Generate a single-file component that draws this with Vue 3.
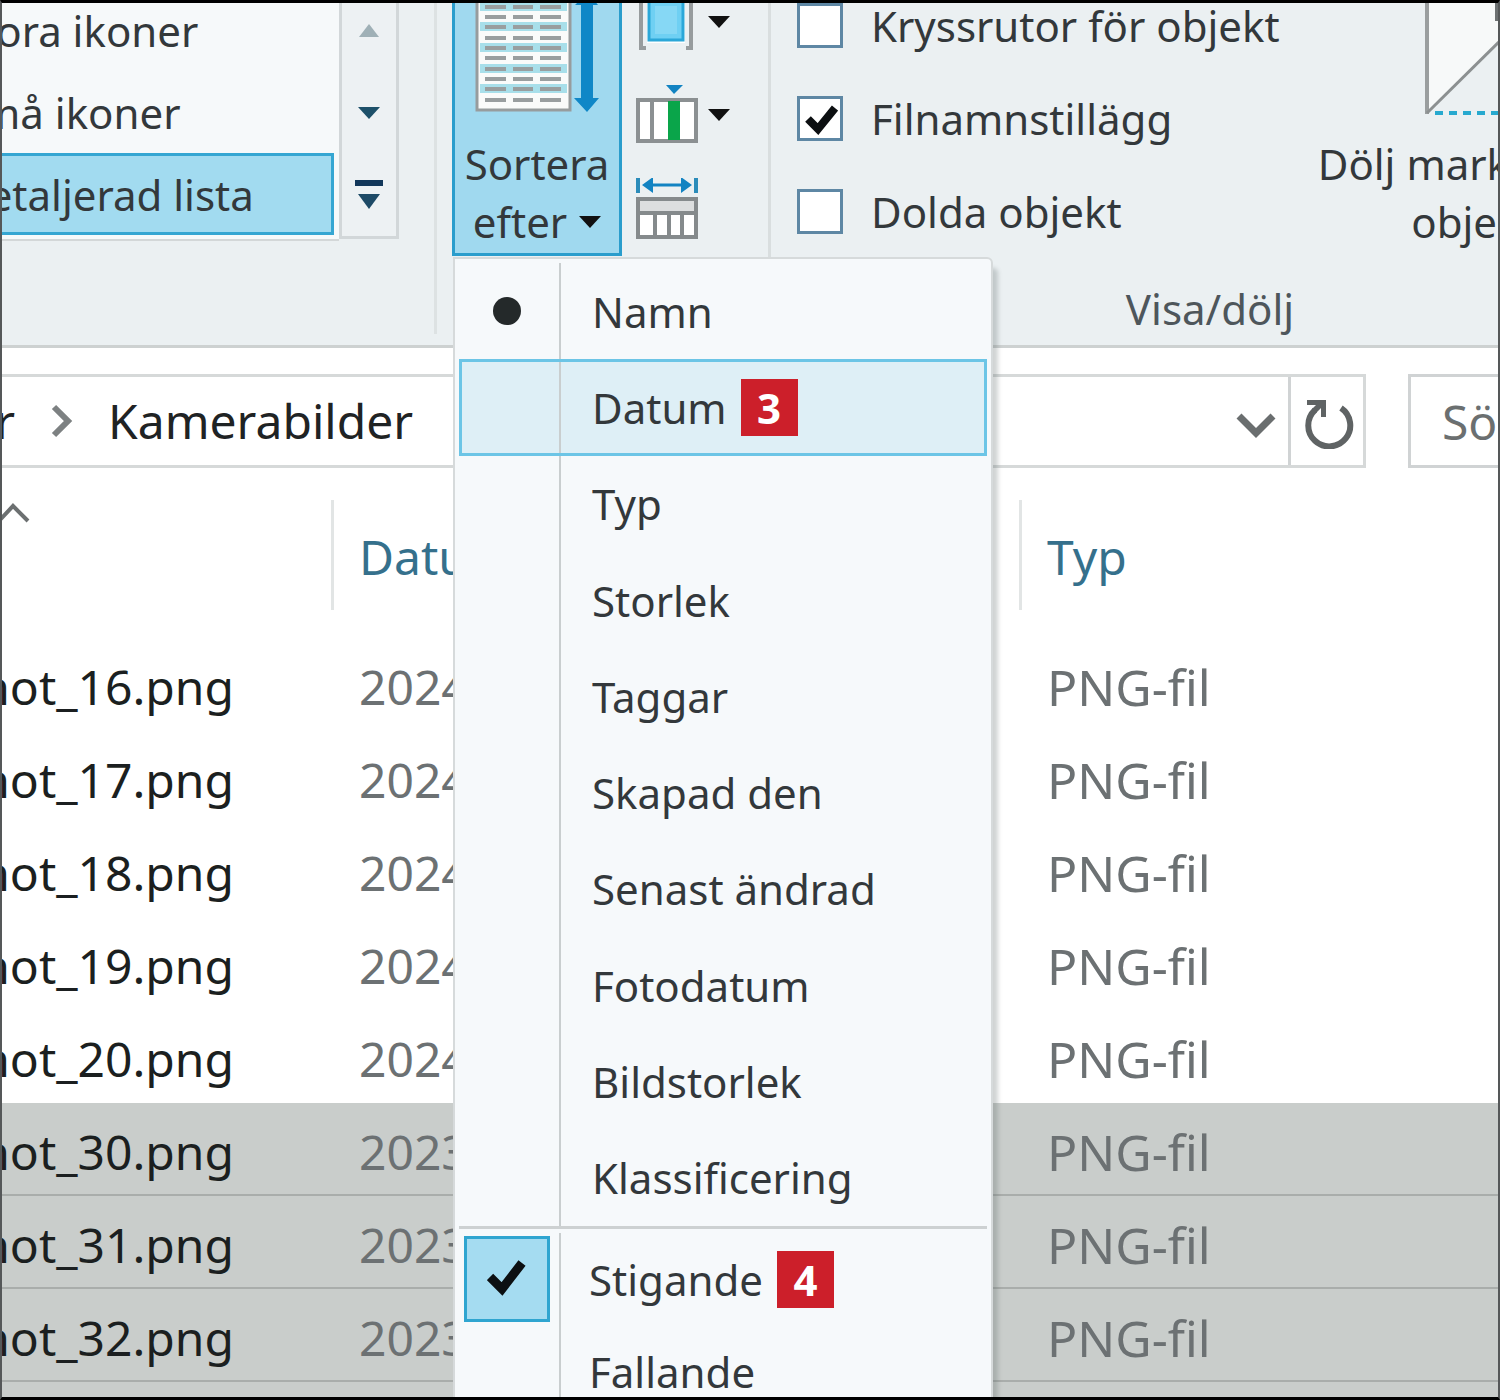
<script setup>
import { ref } from 'vue'

const layouts = ['Stora ikoner', 'Små ikoner', 'Detaljerad lista']
const activeLayout = ref('Detaljerad lista')

const toggles = ref([
  { id: 'item-checks', label: 'Kryssrutor för objekt', on: false },
  { id: 'extensions', label: 'Filnamnstillägg', on: true },
  { id: 'hidden-items', label: 'Dolda objekt', on: false },
])

const sortKeys = [
  { label: 'Namn', current: true },
  { label: 'Datum', hot: true, step: 3 },
  { label: 'Typ' },
  { label: 'Storlek' },
  { label: 'Taggar' },
  { label: 'Skapad den' },
  { label: 'Senast ändrad' },
  { label: 'Fotodatum' },
  { label: 'Bildstorlek' },
  { label: 'Klassificering' },
]
const directions = [
  { label: 'Stigande', checked: true, step: 4 },
  { label: 'Fallande' },
]

const files = [
  { name: 'hot_16.png', date: '2024', type: 'PNG-fil' },
  { name: 'hot_17.png', date: '2024', type: 'PNG-fil' },
  { name: 'hot_18.png', date: '2024', type: 'PNG-fil' },
  { name: 'hot_19.png', date: '2024', type: 'PNG-fil' },
  { name: 'hot_20.png', date: '2024', type: 'PNG-fil' },
  { name: 'hot_30.png', date: '2023', type: 'PNG-fil', selected: true },
  { name: 'hot_31.png', date: '2023', type: 'PNG-fil', selected: true },
  { name: 'hot_32.png', date: '2023', type: 'PNG-fil', selected: true },
  { name: '', date: '', type: '', selected: true },
]

const paperRows = [7, 17, 27, 38, 48, 58, 69, 79, 89, 100]
</script>

<template>
  <main class="window">
    <header class="ribbon">
      <section class="layout-group">
        <div class="gallery">
          <button
            v-for="name in layouts"
            :key="name"
            type="button"
            class="layout-item"
            :class="{ active: name === activeLayout }"
            @click="activeLayout = name"
          >{{ name }}</button>
        </div>
        <div class="gallery-scroll">
          <button type="button" aria-label="Upp">
            <svg width="22" height="14" viewBox="0 0 22 14"><path d="M11 0 L21 13 H1 Z" fill="#9fb0b6" /></svg>
          </button>
          <button type="button" aria-label="Ned">
            <svg width="22" height="12" viewBox="0 0 22 12"><path d="M0 0 H22 L11 12 Z" fill="#1d5069" /></svg>
          </button>
          <button type="button" aria-label="Mer">
            <svg width="28" height="30" viewBox="0 0 28 30">
              <rect width="28" height="6" fill="#12375a" />
              <path d="M3 14 H25 L14 29 Z" fill="#1d4a66" />
            </svg>
          </button>
        </div>
      </section>

      <section class="view-group">
        <div class="sort">
          <button type="button" class="sort-button" aria-haspopup="menu" aria-expanded="true">
            <svg class="sort-art" width="128" height="113" viewBox="0 0 128 113">
              <rect x="4" y="-10" width="93" height="120" fill="#fafbfa" stroke="#979c9d" stroke-width="3" />
              <g v-for="(y, i) in paperRows" :key="y">
                <rect v-if="i % 2 === 0" x="7" :y="y - 5" width="87" height="9" fill="#a8dfea" />
                <path :d="`M12 ${y} h21 M40 ${y} h20 M67 ${y} h21`" stroke="#999e9f" stroke-width="4" />
              </g>
              <path d="M108 0 H120 V98 H126 L114 112 L101 98 H108 Z M102 5 L107 0 H121 L125 5 Z" fill="#0f87c7" />
            </svg>
            <span class="sort-line">Sortera</span>
            <span class="sort-line">efter
              <svg width="22" height="12" viewBox="0 0 22 12"><path d="M0 0 H22 L11 12 Z" fill="#111" /></svg>
            </span>
          </button>

          <div class="menu" role="menu">
            <div class="menu-keys">
              <button
                v-for="item in sortKeys"
                :key="item.label"
                type="button"
                role="menuitemradio"
                :aria-checked="!!item.current"
                class="menu-item"
                :class="{ hot: item.hot }"
              >
                <span class="gutter"><span v-if="item.current" class="dot"></span></span>
                <span class="menu-label">{{ item.label }}</span>
                <span v-if="item.step" class="step">{{ item.step }}</span>
              </button>
            </div>
            <div class="menu-directions">
              <button
                v-for="item in directions"
                :key="item.label"
                type="button"
                role="menuitemradio"
                :aria-checked="!!item.checked"
                class="menu-item"
              >
                <span class="gutter">
                  <span v-if="item.checked" class="tick">
                    <svg width="40" height="42" viewBox="0 0 40 42"><path d="M3 19 L15 31 L35 5" fill="none" stroke="#0c1012" stroke-width="9" /></svg>
                  </span>
                </span>
                <span class="menu-label">{{ item.label }}</span>
                <span v-if="item.step" class="step">{{ item.step }}</span>
              </button>
            </div>
          </div>
        </div>

        <div class="view-tools">
          <button type="button" aria-label="Gruppera efter">
            <svg width="62" height="60" viewBox="0 -8 62 60">
              <path d="M10 48 H5 V-8 M50 48 H55 V-8" fill="none" stroke="#979c9e" stroke-width="4" />
              <rect x="11" y="-8" width="38" height="51" fill="#fff" />
              <rect x="13" y="-9" width="34" height="49" fill="#6fd0f3" stroke="#2ba7d8" stroke-width="3" />
              <rect x="19" y="6" width="22" height="28" fill="#86d8f5" />
            </svg>
            <svg width="22" height="12" viewBox="0 0 22 12"><path d="M0 0 H22 L11 12 Z" fill="#111" /></svg>
          </button>
          <button type="button" aria-label="Lägg till kolumner">
            <svg width="62" height="60" viewBox="0 0 62 60">
              <path d="M30 0 H47 L38 9 Z" fill="#1283c2" />
              <rect x="2" y="15" width="58" height="41" fill="#fff" stroke="#8b9092" stroke-width="4" />
              <path d="M16 15 V56" stroke="#8b9092" stroke-width="4" />
              <rect x="32" y="16" width="12" height="39" fill="#0aa54a" />
            </svg>
            <svg width="22" height="12" viewBox="0 0 22 12"><path d="M0 0 H22 L11 12 Z" fill="#111" /></svg>
          </button>
          <button type="button" aria-label="Anpassa kolumnbredd">
            <svg width="62" height="62" viewBox="0 0 62 62">
              <path d="M2 0 V15 M60 0 V15" stroke="#2b8cba" stroke-width="4" />
              <path d="M10 7 H52" stroke="#1283c2" stroke-width="3" />
              <path d="M6 7 L17 -1 V15 Z M56 7 L45 -1 V15 Z" fill="#1283c2" />
              <rect x="2" y="21" width="58" height="38" fill="#fff" stroke="#858a8c" stroke-width="4" />
              <rect x="4" y="23" width="54" height="11" fill="#dcdedf" />
              <path d="M2 35 H60 M19 35 V59 M33 35 V59 M46 35 V59" stroke="#858a8c" stroke-width="4" />
            </svg>
          </button>
        </div>
      </section>

      <section class="show-group">
        <div class="show-body">
          <div class="toggles">
            <div v-for="toggle in toggles" :key="toggle.id" class="toggle">
              <span class="box">
                <input :id="toggle.id" v-model="toggle.on" type="checkbox" />
                <svg v-if="toggle.on" width="36" height="36" viewBox="0 0 36 36"><path d="M6 18 L16 28 L33 7" fill="none" stroke="#0c0f11" stroke-width="8" /></svg>
              </span>
              <label :for="toggle.id">{{ toggle.label }}</label>
            </div>
          </div>
          <button type="button" class="hide-button">
            <svg width="82" height="117" viewBox="0 0 82 117">
              <path d="M3 0 H82 V36 L3 112 Z" fill="#f7f9f9" />
              <path d="M3 0 V114" stroke="#9a9e9f" stroke-width="4" />
              <path d="M3 113 L80 37" stroke="#8c9091" stroke-width="3" />
              <path d="M73 0 V19 H82" fill="none" stroke="#6d7172" stroke-width="4" />
              <path d="M11 113 H82" stroke="#27a9cf" stroke-width="4" stroke-dasharray="8 6" />
            </svg>
            <span>Dölj mark</span>
            <span class="second-line">obje</span>
          </button>
        </div>
        <p class="caption">Visa/dölj</p>
      </section>
    </header>

    <nav class="location">
      <div class="address">
        <button type="button" class="crumb">r</button>
        <svg class="crumb-arrow" width="22" height="34" viewBox="0 0 22 34"><path d="M3 3 L17 17 L3 31" fill="none" stroke="#7d8182" stroke-width="6" /></svg>
        <button type="button" class="crumb">Kamerabilder</button>
        <button type="button" class="history" aria-label="Tidigare platser">
          <svg width="40" height="28" viewBox="0 0 40 28"><path d="M3 4 L20 21 L37 4" fill="none" stroke="#6a6e6f" stroke-width="7" /></svg>
        </button>
        <button type="button" class="refresh" aria-label="Uppdatera">
          <svg width="52" height="52" viewBox="0 0 52 52">
            <path d="M13 13 A21 21 0 1 0 39 11" fill="none" stroke="#5f6364" stroke-width="6" />
            <path d="M5 3 H24 V20 H19 V11 L14 16 L10 12 L14 8 H5 Z" fill="#5f6364" />
          </svg>
        </button>
      </div>
      <input class="search" type="text" placeholder="Sö" aria-label="Sö" />
    </nav>

    <table class="files">
      <colgroup>
        <col class="col-name" />
        <col class="col-date" />
        <col />
      </colgroup>
      <thead>
        <tr>
          <th aria-label="Namn" aria-sort="ascending">
            <div class="head head-name">
              <svg width="34" height="20" viewBox="0 0 34 20"><path d="M-1 18 L13 3 L28 18" fill="none" stroke="#6c7071" stroke-width="4" /></svg>
            </div>
          </th>
          <th><div class="head">Datum</div></th>
          <th><div class="head">Typ</div></th>
        </tr>
      </thead>
      <tbody>
        <tr v-for="(file, i) in files" :key="i" :class="{ selected: file.selected }">
          <td class="name"><div class="name-clip">{{ file.name }}</div></td>
          <td class="date">{{ file.date }}</td>
          <td class="type">{{ file.type }}</td>
        </tr>
      </tbody>
    </table>
  </main>
</template>

<style>
body {
  margin: 0;
  background: #fff;
}
</style>

<style scoped>
.window {
  position: relative;
  height: 100vh;
  overflow: hidden;
  background: #fff;
  color: #33383b;
  font-family: "Noto Sans", "Open Sans", sans-serif;
  font-size: 42px;
}
.window::after {
  content: "";
  position: absolute;
  inset: 0;
  z-index: 5;
  border: solid #555859;
  border-width: 3px 2px;
  border-top-color: #000;
  border-bottom-color: #000;
  pointer-events: none;
}
button {
  margin: 0;
  padding: 0;
  border: 0;
  background: none;
  color: inherit;
  font: inherit;
  white-space: nowrap;
}
svg {
  display: block;
  flex: none;
}

/* Ribbon */
.ribbon {
  display: flex;
  box-sizing: border-box;
  height: 348px;
  border-bottom: 3px solid #cdd1d1;
  background: #ebf0f2;
}
.layout-group {
  display: flex;
  flex: none;
  align-items: flex-start;
  box-sizing: border-box;
  width: 437px;
  height: 334px;
  border-right: 3px solid #dde2e3;
}
.gallery {
  display: flex;
  flex-direction: column;
  justify-content: flex-end;
  box-sizing: border-box;
  width: 339px;
  height: 241px;
  padding: 0 5px 4px 0;
  border-bottom: 2px solid #d3d7d8;
  background: #f6f9fa;
  overflow: hidden;
}
.layout-item {
  flex: none;
  box-sizing: border-box;
  height: 82px;
  margin-left: -42px;
  text-align: left;
}
.layout-item.active {
  border: 3px solid #35a6d2;
  border-left: 0;
  background: #a2dbf0;
}
.gallery-scroll {
  display: flex;
  flex-direction: column;
  justify-content: flex-end;
  box-sizing: border-box;
  width: 60px;
  height: 239px;
  border: solid #d2d7d9;
  border-width: 0 3px 3px;
  background: #edf1f3;
  overflow: hidden;
}
.gallery-scroll button {
  display: flex;
  flex: none;
  align-items: center;
  justify-content: center;
  height: 82px;
}
.view-group {
  display: flex;
  flex: none;
  gap: 14px;
  box-sizing: border-box;
  width: 334px;
  height: 334px;
  padding-left: 15px;
  border-right: 3px solid #d9dedf;
}
.sort {
  position: relative;
  width: 170px;
  height: 256px;
}
.sort-button {
  display: flex;
  flex-direction: column;
  align-items: center;
  box-sizing: border-box;
  width: 100%;
  height: 100%;
  border: 3px solid #2a9dcc;
  border-top: 0;
  background: #a0d9ef;
}
.sort-art {
  margin-bottom: 22px;
}
.sort-line {
  display: flex;
  align-items: center;
  gap: 12px;
  height: 58px;
  line-height: 58px;
}
.view-tools {
  display: flex;
  flex-direction: column;
  gap: 33px;
  margin-top: -8px;
}
.view-tools button {
  display: flex;
  align-items: center;
  gap: 10px;
}

.show-group {
  flex: none;
  width: 878px;
}
.show-body {
  display: flex;
  justify-content: space-between;
  height: 258px;
}
.toggles {
  display: flex;
  flex-direction: column;
  justify-content: flex-end;
  padding-left: 26px;
}
.toggle {
  display: flex;
  flex: none;
  align-items: center;
  gap: 28px;
  height: 93px;
}
.box {
  display: grid;
  place-items: center;
}
.box > * {
  grid-area: 1 / 1;
  pointer-events: none;
}
.box input {
  appearance: none;
  box-sizing: border-box;
  width: 46px;
  height: 45px;
  margin: 0;
  border: 3px solid #5e87a4;
  background: #fff;
  pointer-events: auto;
}
.hide-button {
  display: flex;
  flex-direction: column;
  align-items: flex-end;
  width: 200px;
  margin-right: 140px;
  line-height: 58px;
}
.hide-button svg {
  margin: 0 3px 18px 0;
}
.second-line {
  padding-right: 12px;
}
.caption {
  margin: 21px 0 0;
  color: #4e565b;
  line-height: 60px;
  text-align: center;
}

/* Drop-down menu */
.menu {
  position: absolute;
  top: 257px;
  left: 1px;
  z-index: 2;
  box-sizing: border-box;
  width: 540px;
  padding: 4px 4px 0;
  border: 2px solid #d6dadb;
  border-radius: 0 6px 0 0;
  background: #f6f9fb;
  box-shadow: 6px 10px 4px -1px rgba(90, 100, 100, 0.28);
}
.menu-keys {
  display: grid;
  grid-auto-rows: 1fr;
  height: 963px;
  border-bottom: 3px solid #cdd1d2;
}
.menu-directions {
  display: grid;
  grid-auto-rows: 92px;
  padding-top: 4px;
}
.menu-item {
  position: relative;
  display: flex;
  align-items: center;
  width: 100%;
  text-align: left;
}
.menu-item.hot {
  background: #deeff6;
  outline: 3px solid #6cc5e6;
  outline-offset: -3px;
}
.gutter {
  display: flex;
  align-items: center;
  justify-content: center;
  align-self: stretch;
  box-sizing: border-box;
  width: 102px;
  padding-right: 4px;
  border-right: 2px solid #c9cecf;
}
.dot {
  width: 28px;
  height: 28px;
  border-radius: 50%;
  background: #24292a;
}
.tick {
  display: grid;
  place-items: center;
  box-sizing: border-box;
  width: 86px;
  height: 86px;
  border: 3px solid #2fa5d0;
  background: #a5dcf1;
}
.menu-label {
  padding-left: 31px;
}
.menu-directions .menu-label {
  padding-left: 28px;
}
.step {
  width: 57px;
  height: 57px;
  margin-left: 14px;
  background: #cc1f2a;
  color: #fff;
  font-weight: 700;
  line-height: 57px;
  text-align: center;
}

/* Address row */
.location {
  display: flex;
  gap: 42px;
  padding-top: 26px;
  color: #1f2324;
  font-size: 48px;
}
.address {
  display: flex;
  flex: 1;
  align-items: center;
  box-sizing: border-box;
  height: 94px;
  border: 3px solid #d6d9d9;
  border-left: 0;
  overflow: hidden;
}
.crumb {
  line-height: 64px;
}
.crumb:first-child {
  width: 15px;
  direction: rtl;
}
.crumb-arrow {
  margin: 0 35px 0 36px;
}
.history {
  margin: 10px 12px 0 auto;
}
.refresh {
  display: grid;
  place-items: center;
  align-self: stretch;
  width: 75px;
  padding: 4px 0 0 2px;
  border-left: 3px solid #d0d3d4;
}
.search {
  box-sizing: border-box;
  width: 92px;
  height: 94px;
  padding: 0 0 0 31px;
  border: 3px solid #d0d3d4;
  border-right: 0;
  border-radius: 0;
  background: #fff;
  font: inherit;
}
.search::placeholder {
  color: #6b6f70;
  opacity: 1;
}

/* File list */
.files {
  width: 100%;
  border-collapse: collapse;
  table-layout: fixed;
  font-size: 48px;
}
.col-name {
  width: 331px;
}
.col-date {
  width: 688px;
}
th {
  height: 170px;
  padding: 0;
  color: #35708c;
  font-weight: 400;
  text-align: left;
}
.head {
  height: 110px;
  margin-top: 4px;
  padding-left: 25px;
  border-left: 3px solid #e2e5e5;
  line-height: 114px;
}
.head-name {
  padding: 3px 0 0;
  height: 107px;
  border-left: 0;
}
td {
  height: 88px;
  padding: 5px 0 0;
  line-height: 64px;
}
.name {
  color: #1b1f20;
}
.name-clip {
  display: flex;
  justify-content: flex-end;
  width: 234px;
  overflow: hidden;
}
.date,
.type {
  padding-left: 28px;
  color: #6c7173;
}
.type {
  font-size: 50px;
}
.selected {
  background: #c9cdcb;
  box-shadow: inset 0 -2px #a9adab;
}
</style>
